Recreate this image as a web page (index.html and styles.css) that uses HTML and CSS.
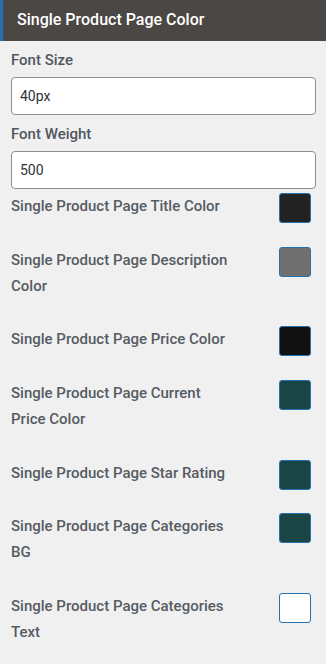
FILE: index.html
```html
<!DOCTYPE html>
<html>
<head>
  <title>Single Product Page Color</title>
  <link rel="stylesheet" href="styles.css">
</head>
<body>
  <div class="panel">
    <h3 class="panel-title">Single Product Page Color</h3>

    <div class="controls">
      <label class="field-label" for="font-size">Font Size</label>
      <input type="text" class="text-input" id="font-size" value="40px">

      <label class="field-label" for="font-weight">Font Weight</label>
      <input type="text" class="text-input last" id="font-weight" value="500">

      <div class="color-row">
        <span class="color-label">Single Product Page Title Color</span>
        <button class="swatch" style="background-color: #222222"></button>
      </div>
      <div class="color-row">
        <span class="color-label">Single Product Page Description Color</span>
        <button class="swatch" style="background-color: #707070"></button>
      </div>
      <div class="color-row">
        <span class="color-label">Single Product Page Price Color</span>
        <button class="swatch" style="background-color: #111111"></button>
      </div>
      <div class="color-row">
        <span class="color-label">Single Product Page Current Price Color</span>
        <button class="swatch" style="background-color: #1b4545"></button>
      </div>
      <div class="color-row">
        <span class="color-label">Single Product Page Star Rating</span>
        <button class="swatch" style="background-color: #1b4545"></button>
      </div>
      <div class="color-row">
        <span class="color-label">Single Product Page Categories BG</span>
        <button class="swatch" style="background-color: #1b4545"></button>
      </div>
      <div class="color-row">
        <span class="color-label">Single Product Page Categories Text</span>
        <button class="swatch" style="background-color: #ffffff"></button>
      </div>
    </div>
  </div>
</body>
</html>
```

FILE: styles.css
```css
body {
  margin: 0;
  background-color: #f0f0f1;
  font-family: Roboto, "Liberation Sans", sans-serif;
  color: #50575e;
}

.panel-title {
  margin: 0;
  height: 41px;
  padding-left: 14px;
  line-height: 39px;
  font-size: 16px;
  font-weight: 500;
  color: #fff;
  background-color: #4b4744;
  border-left: 3px solid #2271b1;
  box-sizing: border-box;
}

.controls {
  padding: 9px 10px 0 11px;
}

.field-label {
  display: block;
  line-height: 20px;
  margin-bottom: 7px;
  font-size: 15px;
  font-weight: 500;
}

.text-input {
  display: block;
  width: 100%;
  height: 38px;
  margin: 0 0 9px;
  padding: 0 8px;
  box-sizing: border-box;
  font-family: Roboto, "Liberation Sans", sans-serif;
  font-size: 14px;
  color: #2c3338;
  background-color: #fff;
  border: 1px solid #8c8f94;
  border-radius: 4px;
}

.text-input.last {
  margin-bottom: 4px;
}

.color-row {
  display: flex;
  justify-content: space-between;
  align-items: flex-start;
  margin-bottom: 27.7px;
}

.color-label {
  width: 222px;
  line-height: 26px;
  font-size: 15px;
  font-weight: 500;
  color: #555c63;
}

.swatch {
  width: 32px;
  height: 30px;
  margin: 0 5px -4px 0;
  padding: 0;
  border: 1px solid #2271b1;
  border-radius: 3px;
  cursor: pointer;
}
```
